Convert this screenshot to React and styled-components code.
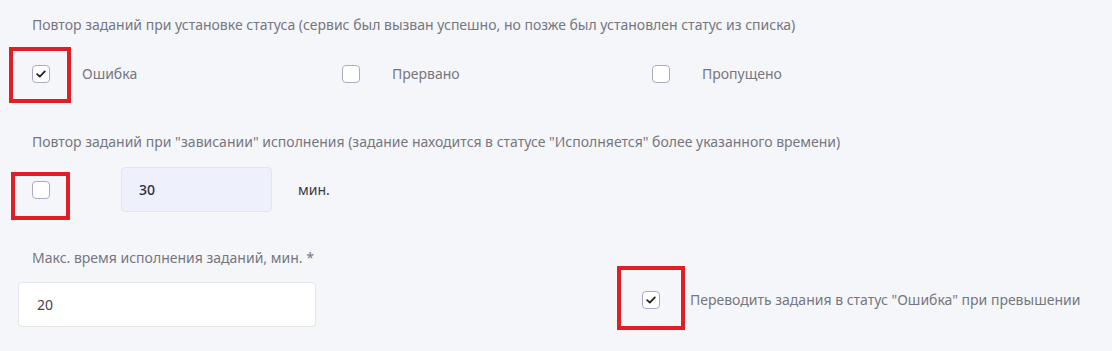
import styled, { createGlobalStyle } from "styled-components";

const GlobalStyle = createGlobalStyle`
  body {
    margin: 0;
    background: #f5f6fa;
    font-family: "Noto Sans", "Open Sans", sans-serif;
  }
`;

const Page = styled.div`
  padding: 15px 18px 0 18px;
  height: 351px;
  box-sizing: border-box;
  overflow: hidden;
`;

const Label = styled.div`
  font-size: 14px;
  line-height: 20px;
  color: #76767f;
  padding-left: ${(p) => (p.$flush ? 0 : 14)}px;
  white-space: nowrap;
`;

const StatusRow = styled.div`
  display: grid;
  grid-template-columns: 310px 310px 310px;
  padding-left: 14px;
  margin-top: 29px;
`;

const Option = styled.label`
  display: flex;
  align-items: center;
  gap: ${(p) => p.$gap || 32}px;
  font-size: 14px;
  color: #76767f;
  white-space: nowrap;
`;

const Box = styled.span`
  position: relative;
  flex: none;
  width: 18px;
  height: 18px;
  box-sizing: border-box;
  border: 1.5px solid #aaaac8;
  border-radius: 4px;
  background: #ffffff;
  display: flex;
  align-items: center;
  justify-content: center;
`;

const Highlight = styled.span`
  position: absolute;
  top: -${(p) => p.$t}px;
  left: -${(p) => p.$l}px;
  right: -${(p) => p.$r}px;
  bottom: -${(p) => p.$b}px;
  border: 4px solid #e11d25;
  pointer-events: none;
`;

const Section = styled.div`
  margin-top: ${(p) => p.$top}px;
`;

const HangRow = styled.div`
  display: flex;
  align-items: center;
  padding-left: 14px;
  margin-top: 15px;
`;

const Field = styled.div`
  box-sizing: border-box;
  width: ${(p) => p.$w}px;
  height: 45px;
  border-radius: 4px;
  border: 1px solid ${(p) => (p.$tinted ? "#e2e4f2" : "#e4e4ea")};
  background: ${(p) => (p.$tinted ? "#eef0fc" : "#ffffff")};
  display: flex;
  align-items: center;
  padding-left: ${(p) => (p.$tinted ? 17 : 18)}px;
  font-size: 14px;
  font-weight: ${(p) => (p.$tinted ? 500 : 400)};
  color: ${(p) => (p.$tinted ? "#2f2f36" : "#44444c")};
`;

const Unit = styled.span`
  font-size: 14px;
  color: #3a3a42;
  margin-left: 26px;
`;

const LimitRow = styled.div`
  display: flex;
  align-items: flex-end;
  margin-top: 36px;
`;

const LimitColumn = styled.div`
  display: flex;
  flex-direction: column;
  gap: 14px;
`;

const FailOption = styled.div`
  margin-left: 326px;
  margin-bottom: 18px;
`;

function Check({ checked, mark }) {
  return (
    <Box>
      {checked && (
        <svg width="10" height="8" viewBox="0 0 10 8">
          <path d="M1.2 4.2 L3.8 6.6 L8.8 1.4" fill="none" stroke="#222" strokeWidth="1.8" strokeLinecap="round" strokeLinejoin="round" />
        </svg>
      )}
      {mark && <Highlight $t={mark[0]} $r={mark[1]} $b={mark[2]} $l={mark[3]} />}
    </Box>
  );
}

export default function App() {
  return (
    <>
      <GlobalStyle />
      <Page>
        <Label>Повтор заданий при установке статуса (сервис был вызван успешно, но позже был установлен статус из списка)</Label>
        <StatusRow>
          <Option>
            <Check checked mark={[19, 22, 21, 24]} />
            Ошибка
          </Option>
          <Option>
            <Check />
            Прервано
          </Option>
          <Option>
            <Check />
            Пропущено
          </Option>
        </StatusRow>

        <Section $top={49}>
          <Label>Повтор заданий при "зависании" исполнения (задание находится в статусе "Исполняется" более указанного времени)</Label>
          <HangRow>
            <Check mark={[10, 21, 22, 22]} />
            <Field $tinted $w={151} style={{ marginLeft: 71 }}>30</Field>
            <Unit>мин.</Unit>
          </HangRow>
        </Section>

        <LimitRow>
          <LimitColumn>
            <Label>Макс. время исполнения заданий, мин. *</Label>
            <Field $w={298}>20</Field>
          </LimitColumn>
          <FailOption>
            <Option $gap={30}>
              <Check checked mark={[26, 26, 22, 26]} />
              Переводить задания в статус "Ошибка" при превышении
            </Option>
          </FailOption>
        </LimitRow>
      </Page>
    </>
  );
}
